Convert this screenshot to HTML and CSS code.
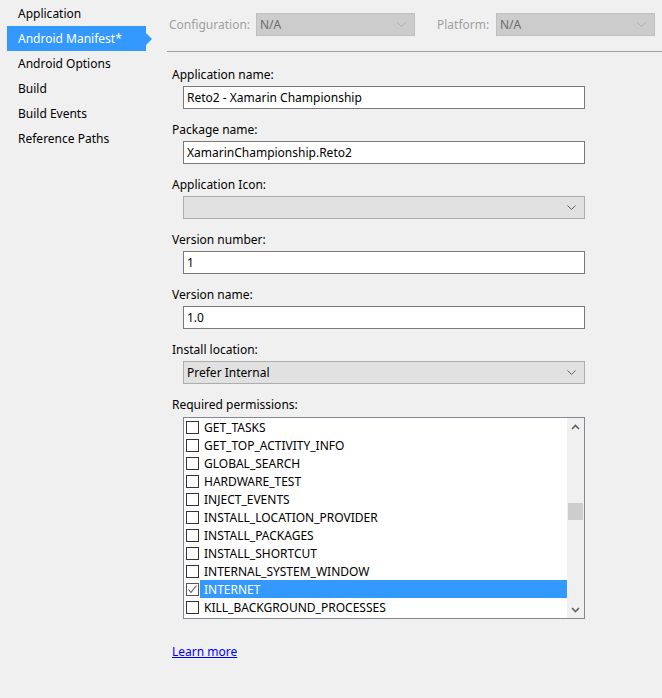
FILE: index.html
```html
<!DOCTYPE html>
<html>
<head>
<meta charset="utf-8">
<link rel="stylesheet" href="styles.css">
</head>
<body>
<div class="page">
  <nav class="sidebar">
    <div class="nav-item">Application</div>
    <div class="nav-item active">Android Manifest*</div>
    <div class="nav-item">Android Options</div>
    <div class="nav-item">Build</div>
    <div class="nav-item">Build Events</div>
    <div class="nav-item">Reference Paths</div>
  </nav>
  <main class="main">
    <div class="toolbar">
      <span class="tb-label">Configuration:</span>
      <div class="combo disabled"><span>N/A</span><svg class="chev" width="9" height="5" viewBox="0 0 9 5"><path d="M0.5 0.5 L4.5 4.5 L8.5 0.5" fill="none" stroke="currentColor" stroke-width="1"/></svg></div>
      <span class="tb-label platform">Platform:</span>
      <div class="combo disabled"><span>N/A</span><svg class="chev" width="9" height="5" viewBox="0 0 9 5"><path d="M0.5 0.5 L4.5 4.5 L8.5 0.5" fill="none" stroke="currentColor" stroke-width="1"/></svg></div>
    </div>
    <div class="form">
      <div class="field">
        <div class="label">Application name:</div>
        <div class="textbox">Reto2 - Xamarin Championship</div>
      </div>
      <div class="field">
        <div class="label">Package name:</div>
        <div class="textbox">XamarinChampionship.Reto2</div>
      </div>
      <div class="field">
        <div class="label">Application Icon:</div>
        <div class="select"><span></span><svg class="chev" width="9" height="5" viewBox="0 0 9 5"><path d="M0.5 0.5 L4.5 4.5 L8.5 0.5" fill="none" stroke="currentColor" stroke-width="1"/></svg></div>
      </div>
      <div class="field">
        <div class="label">Version number:</div>
        <div class="textbox">1</div>
      </div>
      <div class="field">
        <div class="label">Version name:</div>
        <div class="textbox">1.0</div>
      </div>
      <div class="field">
        <div class="label">Install location:</div>
        <div class="select"><span>Prefer Internal</span><svg class="chev" width="9" height="5" viewBox="0 0 9 5"><path d="M0.5 0.5 L4.5 4.5 L8.5 0.5" fill="none" stroke="currentColor" stroke-width="1"/></svg></div>
      </div>
      <div class="field">
        <div class="label">Required permissions:</div>
        <div class="listbox">
          <div class="rows">
            <div class="row"><span class="cb"></span><span class="txt">GET_TASKS</span></div>
            <div class="row"><span class="cb"></span><span class="txt">GET_TOP_ACTIVITY_INFO</span></div>
            <div class="row"><span class="cb"></span><span class="txt">GLOBAL_SEARCH</span></div>
            <div class="row"><span class="cb"></span><span class="txt">HARDWARE_TEST</span></div>
            <div class="row"><span class="cb"></span><span class="txt">INJECT_EVENTS</span></div>
            <div class="row"><span class="cb"></span><span class="txt">INSTALL_LOCATION_PROVIDER</span></div>
            <div class="row"><span class="cb"></span><span class="txt">INSTALL_PACKAGES</span></div>
            <div class="row"><span class="cb"></span><span class="txt">INSTALL_SHORTCUT</span></div>
            <div class="row"><span class="cb"></span><span class="txt">INTERNAL_SYSTEM_WINDOW</span></div>
            <div class="row selected"><span class="cb checked"><svg width="11" height="11" viewBox="0 0 11 11"><path d="M1.5 5.5 L4 8.5 L9.5 1.5" fill="none" stroke="#555" stroke-width="1.1"/></svg></span><span class="txt">INTERNET</span></div>
            <div class="row"><span class="cb"></span><span class="txt">KILL_BACKGROUND_PROCESSES</span></div>
          </div>
          <div class="scrollbar">
            <div class="sb-btn"><svg width="9" height="6" viewBox="0 0 9 6"><path d="M1 5 L4.5 1.5 L8 5" fill="none" stroke="#606060" stroke-width="1.6"/></svg></div>
            <div class="sb-track"><div class="sb-thumb"></div></div>
            <div class="sb-btn"><svg width="9" height="6" viewBox="0 0 9 6"><path d="M1 1 L4.5 4.5 L8 1" fill="none" stroke="#606060" stroke-width="1.6"/></svg></div>
          </div>
        </div>
      </div>
      <a class="learn" href="#">Learn more</a>
    </div>
  </main>
</div>
</body>
</html>
```

FILE: styles.css
```css
* { box-sizing: border-box; }
html, body {
  margin: 0;
  padding: 0;
  background: #f0f0f0;
  font-family: "Noto Sans", "Open Sans", sans-serif;
  font-size: 12px;
  color: #000;
}
.page {
  display: flex;
  width: 662px;
  height: 698px;
  overflow: hidden;
}
.sidebar {
  width: 167px;
  flex: none;
  padding-top: 1px;
}
.nav-item {
  height: 25px;
  line-height: 26px;
  margin-left: 7px;
  width: 139px;
  padding-left: 11px;
  white-space: nowrap;
  position: relative;
}
.nav-item.active {
  background: #3399ff;
  color: #fff;
}
.nav-item.active::after {
  content: "";
  position: absolute;
  right: -6px;
  top: 7px;
  border-top: 6px solid transparent;
  border-bottom: 6px solid transparent;
  border-left: 6px solid #3399ff;
}
.main {
  flex: 1;
  min-width: 0;
}
.toolbar {
  height: 52px;
  border-bottom: 1px solid #a0a0a0;
  display: flex;
  align-items: flex-start;
  padding-top: 13px;
  padding-left: 2px;
}
.tb-label {
  color: #a0a0a0;
  line-height: 23px;
  width: 87px;
}
.tb-label.platform {
  width: 59px;
  margin-left: 22px;
}
.combo {
  width: 159px;
  height: 23px;
  display: flex;
  align-items: center;
  justify-content: space-between;
  padding: 0 8px 0 3px;
}
.combo.disabled {
  background: #cccccc;
  border: 1px solid #bfbfbf;
  color: #6d6d6d;
}
.combo.disabled .chev { color: #b0b0b0; }
.form {
  padding-left: 5px;
  padding-top: 15px;
}
.field {
  margin-bottom: 13px;
}
.label {
  line-height: 16px;
  height: 16px;
  margin-bottom: 3px;
}
.textbox {
  margin-left: 11px;
  width: 402px;
  height: 23px;
  border: 1px solid #7a7a7a;
  background: #fff;
  line-height: 21px;
  padding-left: 3px;
  white-space: nowrap;
}
.select {
  margin-left: 11px;
  width: 402px;
  height: 23px;
  border: 1px solid #adadad;
  background: #e1e1e1;
  display: flex;
  align-items: center;
  justify-content: space-between;
  padding: 0 8px 0 3px;
}
.chev { color: #606060; flex: none; }
.listbox {
  margin-left: 11px;
  margin-top: 4px;
  width: 402px;
  height: 202px;
  border: 1px solid #828790;
  background: #fff;
  display: flex;
}
.rows {
  flex: 1;
  min-width: 0;
}
.row {
  height: 18px;
  display: flex;
  align-items: center;
  padding-left: 2px;
  white-space: nowrap;
}
.cb {
  width: 13px;
  height: 13px;
  border: 1px solid #333;
  background: #fff;
  flex: none;
  display: flex;
  align-items: center;
  justify-content: center;
}
.cb.checked { border-color: #555; }
.txt {
  margin-left: 1px;
  padding-left: 4px;
  flex: 1;
  height: 18px;
  line-height: 19px;
}
.row.selected .txt {
  background: #3399ff;
  color: #fff;
}
.scrollbar {
  width: 17px;
  flex: none;
  background: #f0f0f0;
  display: flex;
  flex-direction: column;
}
.sb-btn {
  height: 17px;
  display: flex;
  align-items: center;
  justify-content: center;
}
.sb-track {
  flex: 1;
  padding-top: 68px;
}
.sb-thumb {
  height: 17px;
  margin: 0 1px;
  background: #cdcdcd;
}
.learn {
  display: inline-block;
  margin-top: 12px;
  color: #0000ff;
  text-decoration: underline;
  line-height: 16px;
}
```
